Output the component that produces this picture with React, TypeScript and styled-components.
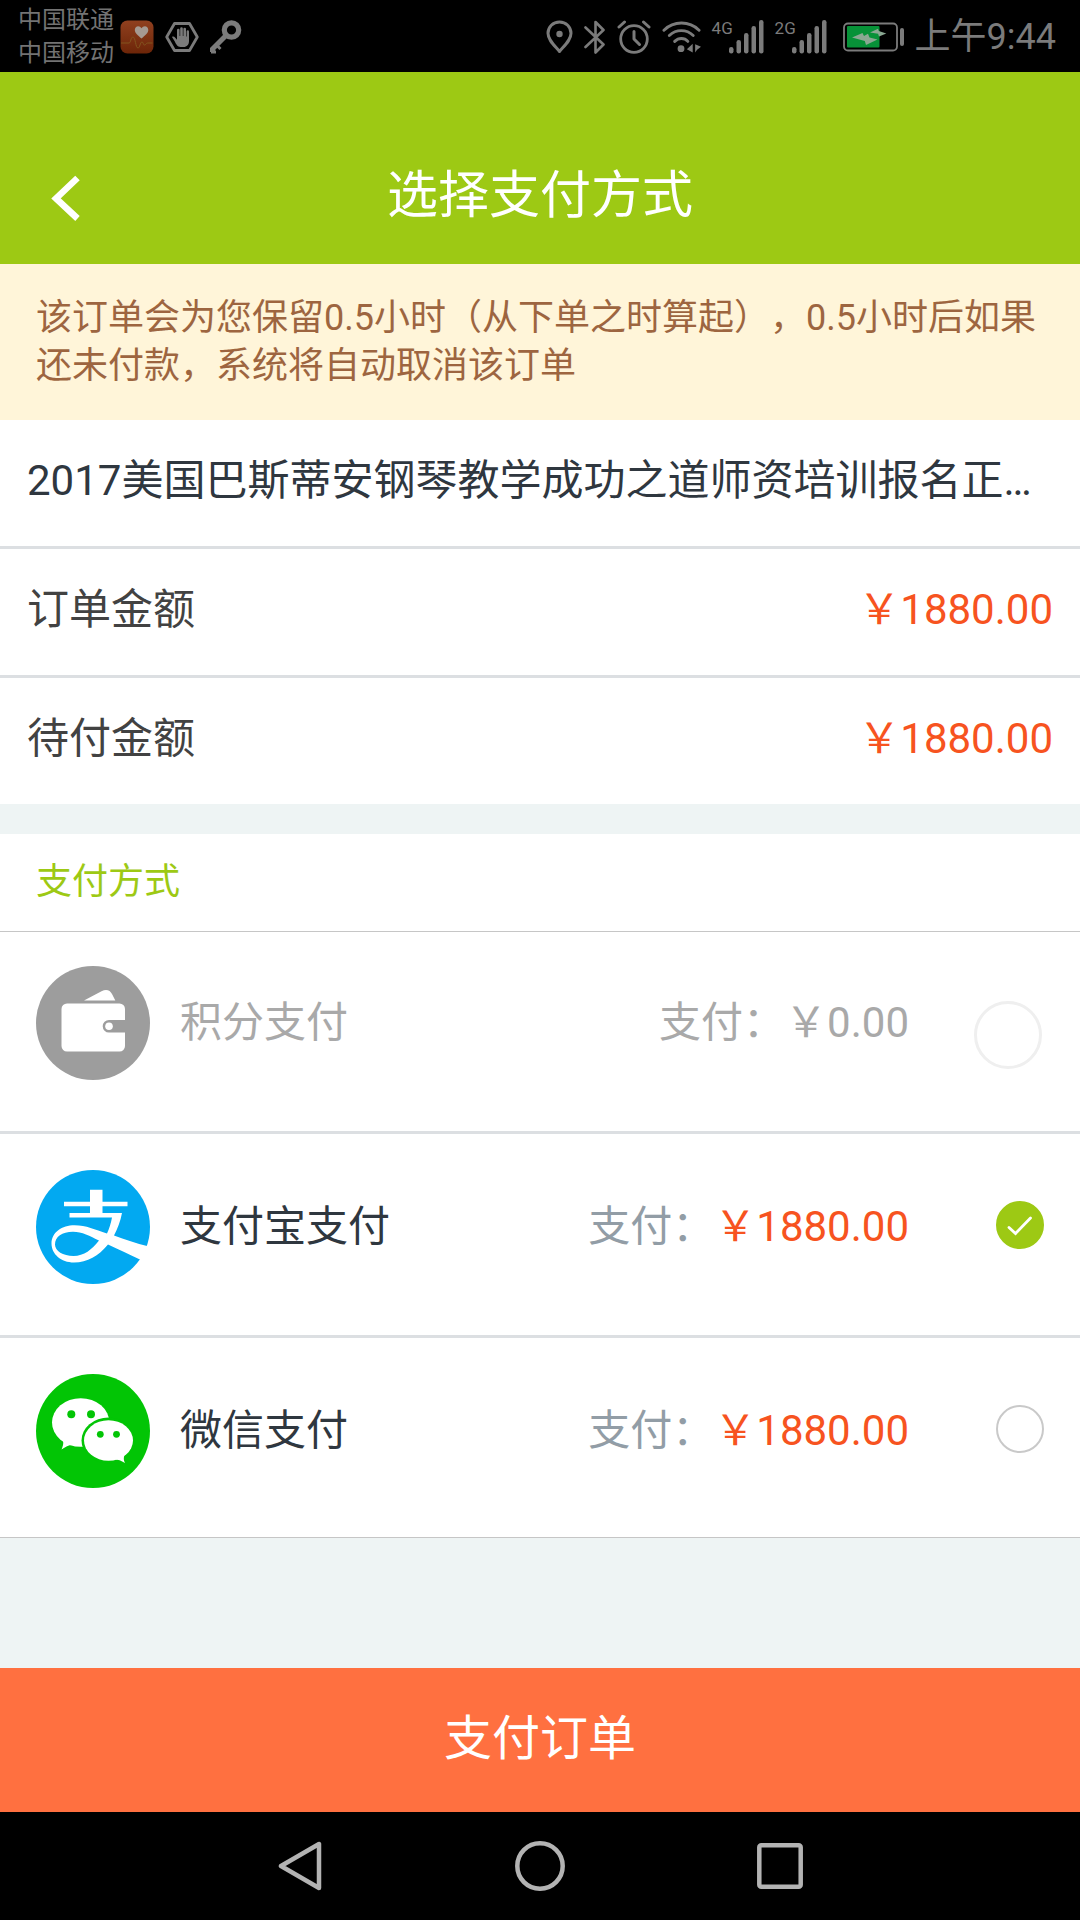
import React, { useState } from "react";
import styled, { createGlobalStyle } from "styled-components";

const GlobalStyle = createGlobalStyle`
  *, *::before, *::after { box-sizing: border-box; }
  body {
    margin: 0;
    background: #eef4f4;
    font-family: Roboto, "Noto Sans CJK SC", sans-serif;
    text-spacing-trim: space-all;
  }
  button, input { font: inherit; margin: 0; }
`;

const Screen = styled.div`
  display: flex;
  flex-direction: column;
  min-height: 100vh;
`;

const StatusBar = styled.div`
  display: flex;
  align-items: center;
  justify-content: space-between;
  height: 72px;
  padding: 2px 24px 0 18px;
  background: #000;
  color: #7b7b7b;
`;

const StatusGroup = styled.div<{ $gap: number }>`
  display: flex;
  align-items: center;
  gap: ${(p) => p.$gap}px;
  svg { display: block; flex: none; }
`;

const Carriers = styled.div`
  display: flex;
  flex-direction: column;
  font-size: 24px;
  line-height: 33px;
  color: #737373;
`;

const Clock = styled.time`
  font-size: 36px;
  line-height: 40px;
`;

const Header = styled.header`
  display: grid;
  grid-template-columns: 132px 1fr 132px;
  align-items: center;
  height: 192px;
  padding-top: 60px;
  background: #9dc914;
`;

const BackButton = styled.button`
  display: flex;
  align-items: center;
  height: 132px;
  padding: 0 0 0 48px;
  border: 0;
  background: none;
  color: #fff;
  cursor: pointer;
`;

const Title = styled.h1`
  margin: 0;
  padding-bottom: 4px;
  text-align: center;
  font-size: 51px;
  line-height: 60px;
  font-weight: 400;
  color: #fff;
`;

const Notice = styled.p`
  margin: 0;
  padding: 30px 36px;
  background: #fff5d9;
  color: #9d6540;
  font-size: 36px;
  line-height: 48px;
`;

const Card = styled.section`
  background: #fff;
`;

const SummaryRow = styled.div`
  display: flex;
  align-items: center;
  justify-content: space-between;
  height: 129px;
  padding: 0 27px 4px;
  border-bottom: 3px solid #dcdfe2;
  font-size: 42px;
  line-height: 60px;
  color: #424242;
  &:last-child { height: 126px; border-bottom: 0; }
`;

const OrderName = styled.span`
  overflow: hidden;
  white-space: nowrap;
  text-overflow: ellipsis;
  color: #2f373f;
`;

const Amount = styled.span<{ $muted?: boolean }>`
  color: ${(p) => (p.$muted ? "#a9a9a9" : "#f75320")};
`;

const Methods = styled.fieldset`
  margin: 30px 0 0;
  padding: 0;
  border: 0;
  border-bottom: 1px solid #c6c6c6;
  min-width: 0;
  background: #fff;
`;

const MethodsTitle = styled.legend`
  float: left;
  width: 100%;
  height: 98px;
  padding: 18px 36px 0;
  border-bottom: 1px solid #c6c6c6;
  font-size: 36px;
  line-height: 60px;
  color: #9dc914;
`;

const Method = styled.label<{ $disabled?: boolean }>`
  clear: both;
  display: flex;
  align-items: center;
  height: 204px;
  padding: 0 36px 15px;
  border-bottom: 3px solid #dcdfe2;
  font-size: 42px;
  line-height: 60px;
  color: ${(p) => (p.$disabled ? "#a9a9a9" : "#2f373f")};
  cursor: ${(p) => (p.$disabled ? "default" : "pointer")};
  svg { display: block; flex: none; }
  &:first-of-type { height: 202px; padding-bottom: 17px; }
  &:last-child { height: 199px; padding-bottom: 13px; border-bottom: 0; }
`;

const MethodName = styled.span`
  flex: 1;
  padding-left: 30px;
`;

const Prefix = styled.span<{ $disabled?: boolean }>`
  color: ${(p) => (p.$disabled ? "#a9a9a9" : "#929da6")};
`;

const RadioSlot = styled.span`
  position: relative;
  display: flex;
  justify-content: flex-end;
  width: 135px;
`;

const Radio = styled.input`
  appearance: none;
  width: 48px;
  height: 48px;
  margin-bottom: 4px;
  border: 2px solid #c9c9c9;
  border-radius: 50%;
  background: #fff;
  &:checked { border-color: #9dc914; background: #9dc914; }
  &:disabled {
    width: 68px;
    height: 68px;
    margin: 24px 2px 0 0;
    border: 3px solid #efefef;
  }
`;

const Tick = styled.svg`
  position: absolute;
  right: 0;
  top: 0;
  pointer-events: none;
`;

const PayButton = styled.button`
  width: 100%;
  height: 144px;
  margin-top: auto;
  padding: 0 0 2px;
  border: 0;
  background: #ff7040;
  color: #fff;
  font-size: 48px;
  line-height: 60px;
  cursor: pointer;
`;

const NavBar = styled.nav`
  display: flex;
  justify-content: center;
  height: 108px;
  background: #000;
`;

const NavButton = styled.button`
  display: flex;
  align-items: center;
  justify-content: center;
  width: 240px;
  padding: 0;
  border: 0;
  background: none;
  color: #b3b3b3;
`;

function HealthIcon() {
  return (
    <svg width="34" height="34" viewBox="0 0 34 34">
      <defs>
        <linearGradient id="health" x1="0" y1="0" x2="0" y2="1">
          <stop offset="0" stopColor="#90401f" />
          <stop offset="1" stopColor="#6c2508" />
        </linearGradient>
      </defs>
      <rect x="0.5" y="0.5" width="33" height="33" rx="7" fill="url(#health)" />
      <path d="M21.500 18.500C18 15.500 14.800 13 14.800 10c0-4.500 5-5 6.700-1.700C23.200 5 28.300 5.500 28.300 10c0 3-3.300 5.500-6.800 8.500z" fill="#a59a92" />
      <path d="M1 23h8c2 0 1.500-6 4-6 2.500 0 2.500 11 5 11 2 0 2-6 4-6 1.500 0 1 3 2.500 3s1.500-2 3-2h5" fill="none" stroke="#83551f" strokeWidth="1" />
    </svg>
  );
}

function HandIcon() {
  return (
    <svg width="34" height="30" viewBox="0 0 34 30" fill="none">
      <path d="M9.500 1.500h15L32.300 15l-7.800 13.500h-15L1.700 15z" stroke="currentColor" strokeWidth="2.800" strokeLinejoin="round" />
      <path d="M7 15c1-1 2.300-.4 3 .5l2 2.300V8a1.300 1.300 0 0 1 2.600 0v6h.6V6.500a1.300 1.300 0 0 1 2.600 0V14h.6V7a1.300 1.300 0 0 1 2.600 0v7.500h.6V9.500a1.200 1.200 0 0 1 2.400 0V19c0 3.500-2 6-5.500 6h-3C12.500 25 11 22 9.800 19.500z" fill="currentColor" />
    </svg>
  );
}

function KeyIcon() {
  return (
    <svg width="32" height="34" viewBox="0 0 32 34" fill="none" stroke="currentColor">
      <circle cx="21.500" cy="10" r="7.200" strokeWidth="5.200" />
      <path d="M16 15.500 2.500 29v3" strokeWidth="5" />
      <path d="m7 25.500 3.500 3.500M1 32h5" strokeWidth="3" />
    </svg>
  );
}

function PinIcon() {
  return (
    <svg width="27" height="34" viewBox="0 0 27 34" fill="none">
      <path d="M13.500 2C7 2 2 7 2 13.300 2 20 8.500 25.500 13.500 31.500 18.500 25.500 25 20 25 13.300 25 7 20 2 13.500 2z" stroke="currentColor" strokeWidth="3" strokeLinejoin="round" />
      <circle cx="13.500" cy="14" r="3.200" fill="currentColor" />
    </svg>
  );
}

function BluetoothIcon() {
  return (
    <svg width="22" height="35" viewBox="0 0 22 35" fill="none">
      <path d="m1.500 7.500 18 17-8 8V2l8 8-18 17" stroke="currentColor" strokeWidth="2.600" strokeLinejoin="round" strokeLinecap="round" />
    </svg>
  );
}

function AlarmIcon() {
  return (
    <svg width="34" height="34" viewBox="0 0 34 34" fill="none" stroke="currentColor">
      <circle cx="17" cy="19" r="13.300" strokeWidth="2.800" />
      <path d="M17 11.500V19l5.500 5.500" strokeWidth="3" strokeLinecap="round" strokeLinejoin="round" />
      <path d="m2 7 5.500-5M32 7l-5.500-5" strokeWidth="3" strokeLinecap="round" />
    </svg>
  );
}

function WifiIcon() {
  return (
    <svg width="39" height="34" viewBox="0 0 40 34" fill="none">
      <g stroke="currentColor" strokeWidth="3" strokeLinecap="round">
        <path d="M2 10c10-9.800 26-9.800 36 0" />
        <path d="M7.500 15.500c7-6.700 17.500-6.700 24.500 0" />
        <path d="M13 21.500c4-4 10-4 13.500 0" />
      </g>
      <circle cx="19.500" cy="29" r="3.500" fill="currentColor" />
      <path d="M31.500 24v9L25.500 29.500zM34 24.500l6 2.500-4 3-2 3z" fill="currentColor" />
    </svg>
  );
}

const Network = styled.div`
  display: flex;
  align-items: flex-end;
  height: 34px;
`;

const NetworkLabel = styled.span`
  align-self: flex-start;
  width: 17px;
  font-size: 17px;
  line-height: 16px;
`;

function Signal({ label }: { label: string }) {
  return (
    <Network>
      <NetworkLabel>{label}</NetworkLabel>
      <svg width="35" height="34" viewBox="0 0 35 34" fill="currentColor">
        <rect x="0" y="27" width="4.500" height="6.500" rx="2.200" />
        <rect x="7.500" y="20" width="4.500" height="13.500" rx="2.200" />
        <rect x="15" y="13" width="4.500" height="20.500" rx="2.200" />
        <rect x="22.500" y="6" width="4.500" height="27.500" rx="2.200" />
        <rect x="30" y="0" width="4.500" height="33.500" rx="2.200" />
      </svg>
    </Network>
  );
}

function BatteryIcon() {
  return (
    <svg width="66" height="30" viewBox="-5 0 66 30" fill="none">
      <rect x="1" y="1.500" width="53" height="27" rx="4" stroke="#7b7b7b" strokeWidth="1.800" />
      <rect x="4" y="4" width="32.500" height="21.500" rx="1" fill="#079238" />
      <path d="m9 15.500 10.500-4.500 1.500 3 4-2.300 1.500 3.800 8 2-11.500 5.500-1.200-4z" fill="#8aa892" />
      <path d="m27 10.500 8-3.800.8 2.300 7.500 2.500-7.300 3-.9-2.700z" fill="#8aa892" />
      <rect x="57" y="6" width="4" height="18" rx="2" fill="#7b7b7b" />
    </svg>
  );
}

function WalletIcon() {
  return (
    <svg width="114" height="114" viewBox="0 0 114 114">
      <circle cx="57" cy="57" r="57" fill="#9d9d9d" />
      <path d="m48 34.500 17.500-9.300c5-2.600 8.700-.9 10.500 2.800l3.300 6.500z" fill="#fff" />
      <path d="M31 37.500h52.500a5.500 5.500 0 0 1 5.500 5.500v11H73a6.300 6.300 0 0 0 0 12.600h16V80a5.500 5.500 0 0 1-5.500 5.500H31a5.500 5.500 0 0 1-5.500-5.500V43a5.500 5.500 0 0 1 5.500-5.500z" fill="#fff" />
      <circle cx="73" cy="60.300" r="3.800" fill="#fff" />
    </svg>
  );
}

function AlipayIcon() {
  return (
    <svg width="114" height="114" viewBox="0 0 114 114">
      <circle cx="57" cy="57" r="57" fill="#02a9f1" />
      <path d="M54 19.700h12.500v12H91.500v4.600H66.500v6.700H86c-1.500 8-4.500 15.500-8 22.500 11 4 22 7.800 34 10.800L105 90C93.500 84.500 82.500 79.500 72 74.500 62.500 86 51.500 92.500 38 92.500 25 92.500 15.500 84 15.500 73.500 15.500 62.500 26 55.300 38.500 55.300c12 0 20 4.500 32.500 8.200 2-4.500 4-10.500 5-16H33.500v-4.500H54v-6.700H28v-4.600h26z" fill="#fff" />
      <path d="M63 70.500C54 66 46 61.700 37 61.700c-11 0-18 5-18 12.800C19 81 27 86 37.500 86 48 86 56 79.500 63 70.500z" fill="#02a9f1" />
    </svg>
  );
}

function WechatIcon() {
  return (
    <svg width="114" height="114" viewBox="0 0 114 114">
      <circle cx="57" cy="57" r="57" fill="#02c505" />
      <ellipse cx="44.700" cy="48.500" rx="28.700" ry="24.300" fill="#fff" />
      <path d="M26 64c2 4 1.500 7-.5 11.500 4-2.500 7-4.500 11-4.500z" fill="#fff" />
      <ellipse cx="72.500" cy="66.500" rx="27" ry="23" fill="#02c505" />
      <ellipse cx="72.500" cy="66.500" rx="24.500" ry="20.300" fill="#fff" />
      <path d="M79 85.500c3 0 6 1 10 3.500-1.500-3-1.500-5-.5-8z" fill="#fff" />
      <circle cx="35.300" cy="40.300" r="4" fill="#02c505" />
      <circle cx="55" cy="40.300" r="4" fill="#02c505" />
      <circle cx="64.300" cy="60.300" r="3.400" fill="#02c505" />
      <circle cx="80.500" cy="60.300" r="3.400" fill="#02c505" />
    </svg>
  );
}

const METHODS = [
  { id: "points", name: "积分支付", amount: "￥0.00", Icon: WalletIcon, disabled: true },
  { id: "alipay", name: "支付宝支付", amount: "￥1880.00", Icon: AlipayIcon, disabled: false },
  { id: "wechat", name: "微信支付", amount: "￥1880.00", Icon: WechatIcon, disabled: false },
];

export default function App() {
  const [selected, setSelected] = useState("alipay");

  return (
    <>
      <GlobalStyle />
      <Screen>
        <StatusBar>
          <StatusGroup $gap={6}>
            <Carriers>
              <span>中国联通</span>
              <span>中国移动</span>
            </Carriers>
            <StatusGroup $gap={11}>
              <HealthIcon />
              <HandIcon />
              <KeyIcon />
            </StatusGroup>
          </StatusGroup>
          <StatusGroup $gap={11}>
            <PinIcon />
            <BluetoothIcon />
            <AlarmIcon />
            <WifiIcon />
            <Signal label="4G" />
            <Signal label="2G" />
            <BatteryIcon />
            <Clock>上午9:44</Clock>
          </StatusGroup>
        </StatusBar>

        <Header>
          <BackButton type="button" aria-label="返回">
            <svg width="34" height="46" viewBox="0 0 34 46" fill="none">
              <path d="M29.500 3 8 23.500l21.500 20" stroke="currentColor" strokeWidth="6.500" />
            </svg>
          </BackButton>
          <Title>选择支付方式</Title>
        </Header>

        <Notice>该订单会为您保留0.5小时（从下单之时算起），0.5小时后如果还未付款，系统将自动取消该订单</Notice>

        <Card>
          <SummaryRow>
            <OrderName>2017美国巴斯蒂安钢琴教学成功之道师资培训报名正…</OrderName>
          </SummaryRow>
          <SummaryRow>
            <span>订单金额</span>
            <Amount>￥1880.00</Amount>
          </SummaryRow>
          <SummaryRow>
            <span>待付金额</span>
            <Amount>￥1880.00</Amount>
          </SummaryRow>
        </Card>

        <Methods>
          <MethodsTitle>支付方式</MethodsTitle>
          {METHODS.map(({ id, name, amount, Icon, disabled }) => (
            <Method key={id} $disabled={disabled}>
              <Icon />
              <MethodName>{name}</MethodName>
              <Prefix $disabled={disabled}>支付：</Prefix>
              <Amount $muted={disabled}>{amount}</Amount>
              <RadioSlot>
                <Radio
                  type="radio"
                  name="method"
                  value={id}
                  disabled={disabled}
                  checked={selected === id}
                  onChange={() => setSelected(id)}
                />
                {selected === id && (
                  <Tick width="48" height="48" viewBox="0 0 48 48" fill="none">
                    <path d="m13 26.500 6.500 6 15-15.500" stroke="#fff" strokeWidth="2.800" strokeLinecap="round" />
                  </Tick>
                )}
              </RadioSlot>
            </Method>
          ))}
        </Methods>

        <PayButton type="button">支付订单</PayButton>

        <NavBar>
          <NavButton type="button" aria-label="后退">
            <svg width="44" height="50" viewBox="0 0 44 50" fill="none">
              <path d="M41 3v44L3 25z" stroke="currentColor" strokeWidth="4.500" strokeLinejoin="round" />
            </svg>
          </NavButton>
          <NavButton type="button" aria-label="主屏幕">
            <svg width="50" height="50" viewBox="0 0 50 50" fill="none">
              <circle cx="25" cy="25" r="22.700" stroke="currentColor" strokeWidth="4.500" />
            </svg>
          </NavButton>
          <NavButton type="button" aria-label="最近任务">
            <svg width="46" height="46" viewBox="0 0 46 46" fill="none">
              <rect x="2.300" y="2.300" width="41.400" height="41.400" rx="2" stroke="currentColor" strokeWidth="4.500" />
            </svg>
          </NavButton>
        </NavBar>
      </Screen>
    </>
  );
}
